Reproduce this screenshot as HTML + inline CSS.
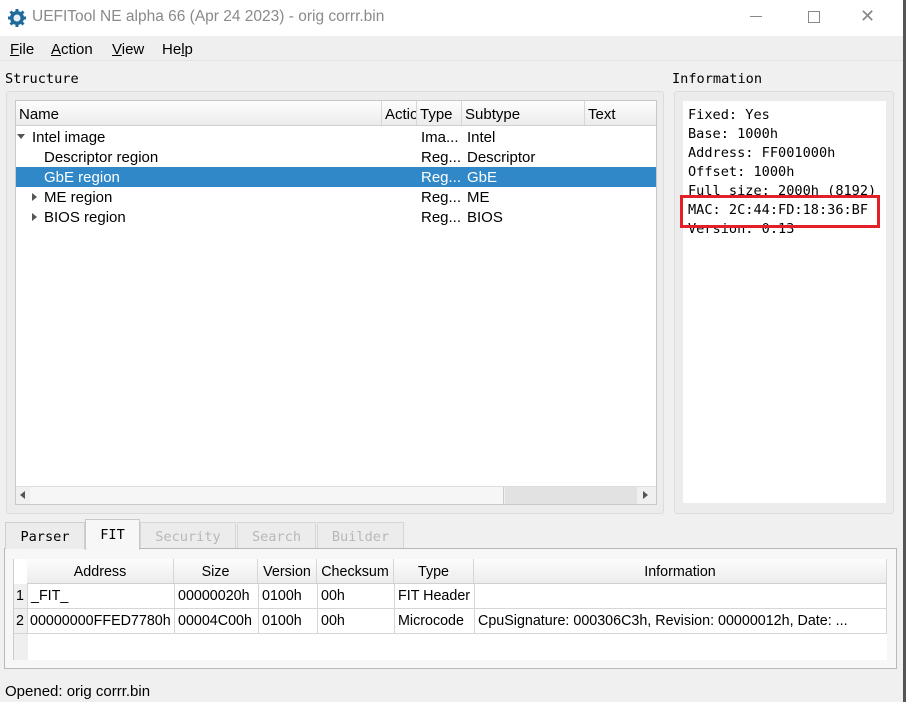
<!DOCTYPE html><html><head><style>
*{margin:0;padding:0;box-sizing:border-box}
body{width:906px;height:702px;background:#f0f0f0;position:relative;overflow:hidden;font-family:"Liberation Sans",sans-serif;font-size:15px;color:#000}
.a{position:absolute;white-space:nowrap}
.m{font-family:"DejaVu Sans Mono","Liberation Mono",monospace;font-size:13.6px}
.hd{background:linear-gradient(#fdfdfd,#ececec);border-bottom:1px solid #d0d0d0}
.cell{position:absolute;height:100%;border-right:1px solid #d6d6d6;padding-left:3px;line-height:25px;overflow:hidden}
.t{font-size:14.3px}
</style></head><body>
<div class="a" style="left:0;top:0;width:903px;height:36px;background:#fff"></div>
<svg class="a" style="left:7px;top:8px" width="20" height="20" viewBox="0 0 20 20"><circle cx="10" cy="10" r="7" fill="#1f6a9a"/><g stroke="#1f6a9a" stroke-width="3"><line x1="10" y1="1" x2="10" y2="19"/><line x1="1" y1="10" x2="19" y2="10"/><line x1="3.5" y1="3.5" x2="16.5" y2="16.5"/><line x1="16.5" y1="3.5" x2="3.5" y2="16.5"/></g><circle cx="10" cy="10" r="3.5" fill="#e8f0f6"/></svg>
<div class="a" style="left:32px;top:8px;font-size:15.5px;color:#8a8a8a">UEFITool NE alpha 66 (Apr 24 2023) - orig corrr.bin</div>
<div class="a" style="left:750px;top:16px;width:12px;height:1px;background:#888"></div>
<div class="a" style="left:808px;top:11px;width:12px;height:12px;border:1px solid #888"></div>
<div class="a" style="left:860px;top:6px;font-size:18px;color:#888">✕</div>
<div class="a" style="left:903px;top:0;width:3px;height:702px;background:#555"></div>
<div class="a" style="left:0;top:36px;width:903px;height:25px;background:#efefef;border-bottom:1px solid #e4e4e4"></div>
<div class="a" style="left:10px;top:41px;font-size:15px"><u>F</u>ile</div>
<div class="a" style="left:51px;top:41px;font-size:15px"><u>A</u>ction</div>
<div class="a" style="left:112px;top:41px;font-size:15px"><u>V</u>iew</div>
<div class="a" style="left:162px;top:41px;font-size:15px">He<u>l</u>p</div>
<div class="a m" style="left:5px;top:71px">Structure</div>
<div class="a" style="left:6px;top:91px;width:658px;height:423px;border:1px solid #dcdcdc;border-radius:3px;background:#ececec"></div>
<div class="a" style="left:15px;top:100px;width:642px;height:405px;background:#fff;border:1px solid #c8c8c8"></div>
<div class="a hd" style="left:16px;top:101px;width:640px;height:25px">
<div class="cell" style="left:0;width:366px;line-height:27px">Name</div>
<div class="cell" style="left:366px;width:35px;line-height:27px">Actio</div>
<div class="cell" style="left:401px;width:45px;line-height:27px">Type</div>
<div class="cell" style="left:446px;width:123px;line-height:27px">Subtype</div>
<div class="cell" style="left:569px;width:72px;border:0;line-height:27px">Text</div>
</div>
<div class="a" style="left:16px;top:167px;width:640px;height:20px;background:#3088c8"></div>
<div class="a" style="left:17px;top:134px;width:0;height:0;border-left:4px solid transparent;border-right:4px solid transparent;border-top:5px solid #555"></div>
<div class="a" style="left:32px;top:129px">Intel image</div><div class="a" style="left:421px;top:129px">Ima...</div><div class="a" style="left:467px;top:129px">Intel</div>
<div class="a" style="left:44px;top:149px">Descriptor region</div><div class="a" style="left:421px;top:149px">Reg...</div><div class="a" style="left:467px;top:149px">Descriptor</div>
<div class="a" style="left:44px;top:169px;color:#fff">GbE region</div><div class="a" style="left:421px;top:169px;color:#fff">Reg...</div><div class="a" style="left:467px;top:169px;color:#fff">GbE</div>
<div class="a" style="left:32px;top:193px;width:0;height:0;border-top:4px solid transparent;border-bottom:4px solid transparent;border-left:5px solid #555"></div>
<div class="a" style="left:44px;top:189px">ME region</div><div class="a" style="left:421px;top:189px">Reg...</div><div class="a" style="left:467px;top:189px">ME</div>
<div class="a" style="left:32px;top:213px;width:0;height:0;border-top:4px solid transparent;border-bottom:4px solid transparent;border-left:5px solid #555"></div>
<div class="a" style="left:44px;top:209px">BIOS region</div><div class="a" style="left:421px;top:209px">Reg...</div><div class="a" style="left:467px;top:209px">BIOS</div>
<div class="a" style="left:16px;top:486px;width:640px;height:18px;background:#f0f0f0;border-top:1px solid #ddd"></div>
<div class="a" style="left:30px;top:487px;width:474px;height:17px;background:#f6f6f6;border-right:1px solid #ccc"></div>
<div class="a" style="left:505px;top:487px;width:132px;height:17px;background:#e2e2e2"></div>
<div class="a" style="left:20px;top:491px;width:0;height:0;border-top:4px solid transparent;border-bottom:4px solid transparent;border-right:5px solid #555"></div>
<div class="a" style="left:643px;top:491px;width:0;height:0;border-top:4px solid transparent;border-bottom:4px solid transparent;border-left:5px solid #555"></div>
<div class="a m" style="left:672px;top:71px">Information</div>
<div class="a" style="left:674px;top:91px;width:220px;height:423px;border:1px solid #dcdcdc;border-radius:3px;background:#ececec"></div>
<div class="a" style="left:683px;top:101px;width:203px;height:402px;background:#fff"></div>
<div class="a m" style="left:688px;top:106px;line-height:19px">Fixed: Yes<br>Base: 1000h<br>Address: FF001000h<br>Offset: 1000h<br>Full size: 2000h (8192)<br>MAC: 2C:44:FD:18:36:BF<br>Version: 0.13</div>
<div class="a" style="left:680px;top:195px;width:200px;height:33px;border:3px solid #e3202a"></div>
<div class="a" style="left:4px;top:548px;width:893px;height:121px;border:1px solid #b8b8b8;background:#f7f7f7"></div>
<div class="a m" style="left:5px;top:522px;width:80px;height:27px;border:1px solid #cfcfcf;border-bottom:0;background:#ececec;text-align:center;line-height:28px">Parser</div>
<div class="a m" style="left:85px;top:519px;width:55px;height:31px;border:1px solid #c8c8c8;border-bottom:0;background:#f7f7f7;text-align:center;line-height:30px">FIT</div>
<div class="a m" style="left:140px;top:522px;width:96px;height:26px;border:1px solid #d6d6d6;border-bottom:0;background:#ececec;color:#b8b8b8;text-align:center;line-height:28px">Security</div>
<div class="a m" style="left:237px;top:522px;width:79px;height:26px;border:1px solid #d6d6d6;border-bottom:0;background:#ececec;color:#b8b8b8;text-align:center;line-height:28px">Search</div>
<div class="a m" style="left:317px;top:522px;width:87px;height:26px;border:1px solid #d6d6d6;border-bottom:0;background:#ececec;color:#b8b8b8;text-align:center;line-height:28px">Builder</div>
<div class="a" style="left:13px;top:559px;width:874px;height:101px;background:#fff;border-left:1px solid #ccc"></div>
<div class="a" style="left:14px;top:584px;width:14px;height:76px;background:#efefef"></div>
<div class="a hd t" style="left:27px;top:559px;width:860px;height:25px;text-align:center">
<div class="cell" style="left:0;width:147px;padding:0;line-height:27px">Address</div>
<div class="cell" style="left:147px;width:84px;padding:0;line-height:27px">Size</div>
<div class="cell" style="left:231px;width:59px;padding:0;line-height:27px">Version</div>
<div class="cell" style="left:290px;width:77px;padding:0;line-height:27px">Checksum</div>
<div class="cell" style="left:367px;width:80px;padding:0;line-height:27px">Type</div>
<div class="cell" style="left:447px;width:413px;padding:0;line-height:27px">Information</div>
</div>
<div class="a t" style="left:14px;top:584px;width:873px;height:25px;border-bottom:1px solid #d6d6d6">
<div class="cell" style="left:0;width:14px;padding-left:2px;background:#efefef">1</div>
<div class="cell" style="left:14px;width:147px">_FIT_</div>
<div class="cell" style="left:161px;width:84px">00000020h</div>
<div class="cell" style="left:245px;width:59px">0100h</div>
<div class="cell" style="left:304px;width:77px">00h</div>
<div class="cell" style="left:381px;width:80px">FIT Header</div>
<div class="cell" style="left:461px;width:412px"></div>
</div>
<div class="a t" style="left:14px;top:609px;width:873px;height:25px;border-bottom:1px solid #d6d6d6">
<div class="cell" style="left:0;width:14px;padding-left:2px;background:#efefef">2</div>
<div class="cell" style="left:14px;width:147px;padding-left:2px">00000000FFED7780h</div>
<div class="cell" style="left:161px;width:84px">00004C00h</div>
<div class="cell" style="left:245px;width:59px">0100h</div>
<div class="cell" style="left:304px;width:77px">00h</div>
<div class="cell" style="left:381px;width:80px">Microcode</div>
<div class="cell" style="left:461px;width:412px">CpuSignature: 000306C3h, Revision: 00000012h, Date: ...</div>
</div>
<div class="a" style="left:5px;top:683px">Opened: orig corrr.bin</div>
</body></html>
